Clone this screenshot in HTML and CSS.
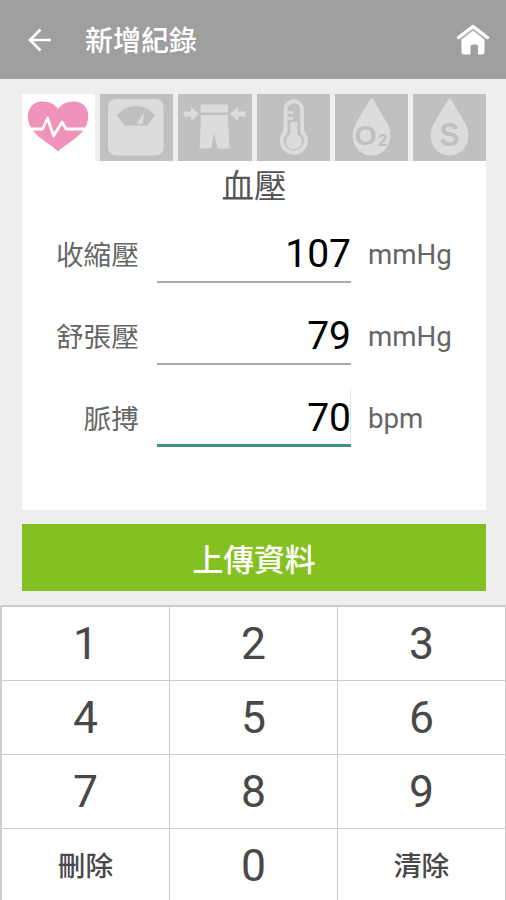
FILE: index.html
```html
<!DOCTYPE html>
<html lang="zh-Hant">
<head>
    <meta charset="UTF-8">
    <meta name="viewport" content="width=device-width, initial-scale=1.0">
    <title>新增紀錄</title>
    <link rel="stylesheet" href="styles.css">
</head>
<body>
    <header class="header">
        <svg class="back" viewBox="0 0 24 24">
            <path d="M23 12H2M12.5 1.5L2 12l10.5 10.5"/>
        </svg>
        <h1>新增紀錄</h1>
        <svg class="home" viewBox="0 0 34 32">
            <path class="house" d="M5.500 15.500L17 6.500l11.500 9V28q0 2.500-2.500 2.500h-4v-8q0-2-2-2h-3.500q-2 0-2 2v8H8q-2.500 0-2.500-2.500z"/>
            <path class="roof-gap" d="M3.500 15.500L17 5l13.500 10.500"/>
            <path class="roof" d="M2.500 13.500L17 2.500l14.500 11"/>
        </svg>
    </header>

    <main class="content">
        <section class="card">
            <nav class="tabs">
                <div class="tab active">
                    <svg viewBox="0 0 73 67">
                        <path class="heart" d="M36 57.500C30 51 13 43 8 32C2 18 9 7.500 20.500 7.500C28 7.500 33.500 11 36 15C38.500 11 44 7.500 51.500 7.500C63 7.500 70 18 64 32C59 43 42 51 36 57.500Z"/>
                        <path class="pulse" d="M8 35H20.500L25.500 24L31.500 42L40 28L44 35H67"/>
                    </svg>
                </div>
                <div class="tab">
                    <svg viewBox="0 0 73 67">
                        <rect class="fill" x="8" y="5" width="55.500" height="56.500" rx="8"/>
                        <path class="cut" d="M16.500 21Q25 12 36 12T55 21L47 31.500H24.500Z"/>
                        <path class="fill" d="M44 18L37 29.500H42.500Z"/>
                    </svg>
                </div>
                <div class="tab">
                    <svg viewBox="0 0 73 67">
                        <rect class="fill" x="22.500" y="10.500" width="27.500" height="8" rx="1.500"/>
                        <path class="fill" d="M23 21H49.500L51.500 54.500H39.500L36 39L33 54.500H21.500Z"/>
                        <path class="fill" d="M5.500 17.500H13V13L21 20L13 27V22.500H5.500ZM67.500 17.500H60V13L52 20L60 27V22.500H67.500Z"/>
                    </svg>
                </div>
                <div class="tab">
                    <svg viewBox="0 0 73 67">
                        <path class="ring" d="M28.500 38V15.500a8.250 8.250 0 0 1 16.500 0V38A12 12 0 1 1 28.500 38Z"/>
                        <circle class="fill" cx="36.750" cy="47.500" r="8"/>
                        <rect class="fill" x="33.250" y="28" width="7" height="16"/>
                        <path class="tick" d="M30 18.500H36M30 24.500H36"/>
                    </svg>
                </div>
                <div class="tab">
                    <svg viewBox="0 0 73 67">
                        <path class="fill" d="M36.500 4.500Q38 4.500 39 7L52.500 30C59.500 44 52.500 61.500 36.500 61.500S13.500 44 20.500 30L34 7Q35 4.500 36.500 4.500Z"/>
                        <text x="19.500" y="51" font-size="28.500">O</text>
                        <text x="43" y="52" font-size="17">2</text>
                    </svg>
                </div>
                <div class="tab">
                    <svg viewBox="0 0 73 67">
                        <path class="fill" d="M36.500 4.500Q38 4.500 39 7L52.500 30C59.500 44 52.500 61.500 36.500 61.500S13.500 44 20.500 30L34 7Q35 4.500 36.500 4.500Z"/>
                        <text x="26.500" y="51.500" font-size="34" textLength="20" lengthAdjust="spacingAndGlyphs">S</text>
                    </svg>
                </div>
            </nav>

            <h2>血壓</h2>

            <div class="row">
                <span class="label">收縮壓</span>
                <span class="value">107</span>
                <span class="unit">mmHg</span>
            </div>
            <div class="row">
                <span class="label">舒張壓</span>
                <span class="value">79</span>
                <span class="unit">mmHg</span>
            </div>
            <div class="row">
                <span class="label">脈搏</span>
                <span class="value focused">70</span>
                <span class="unit">bpm</span>
            </div>
        </section>

        <button class="upload">上傳資料</button>
    </main>

    <div class="keypad">
        <button>1</button>
        <button>2</button>
        <button>3</button>
        <button>4</button>
        <button>5</button>
        <button>6</button>
        <button>7</button>
        <button>8</button>
        <button>9</button>
        <button class="word">刪除</button>
        <button>0</button>
        <button class="word">清除</button>
    </div>
</body>
</html>
```
FILE: styles.css
```css
* {
    box-sizing: border-box;
    margin: 0;
    padding: 0;
    font-family: Roboto, "Noto Sans CJK TC", sans-serif;
}

body {
    background-color: #eeeeee;
    height: 900px;
    overflow: hidden;
}

.header {
    background-color: #9f9f9f;
    height: 79px;
    display: flex;
    align-items: center;
    padding: 0 16px 0 28px;
}

.back {
    width: 24px;
    height: 24px;
    fill: none;
    stroke: #fff;
    stroke-width: 2.6;
}

.header h1 {
    flex: 1;
    margin-left: 33px;
    padding-top: 4px;
    color: #fff;
    font-size: 28px;
    font-weight: 500;
    line-height: 40px;
}

.home {
    width: 34px;
    height: 32px;
}

.roof {
    fill: none;
    stroke: #fff;
    stroke-width: 3.4;
    stroke-linecap: round;
    stroke-linejoin: round;
}

.roof-gap {
    fill: none;
    stroke: #b5b5b5;
    stroke-width: 1.5;
}

.house {
    fill: #fff;
}

.content {
    padding: 15px 20px 14px 22px;
}

.card {
    background-color: #fff;
    height: 416px;
}

.tabs {
    display: flex;
    gap: 5px;
    height: 67px;
    background-color: #eeeeee;
}

.tab {
    flex: 1;
    background-color: #c0c0c0;
}

.tab.active {
    background-color: #fff;
}

.tab svg {
    display: block;
    width: 100%;
    height: 67px;
}

.heart {
    fill: #f093bb;
}

.pulse {
    fill: none;
    stroke: #fff;
    stroke-width: 2.8;
    stroke-linejoin: round;
}

.fill {
    fill: #dcdcdc;
}

.cut, .tab text {
    fill: #c0c0c0;
}

.tab text {
    font-family: "Liberation Sans", sans-serif;
    font-weight: bold;
}

.ring {
    fill: none;
    stroke: #dcdcdc;
    stroke-width: 4;
}

.tick {
    stroke: #dcdcdc;
    stroke-width: 2.5;
}

.card h2 {
    padding: 2px 0;
    color: #555;
    font-size: 32.500px;
    font-weight: 400;
    line-height: 48px;
    text-align: center;
}

.row {
    display: grid;
    grid-template-columns: 117px 194px 1fr;
    column-gap: 18px;
    height: 82px;
    align-items: center;
    color: #666;
    font-size: 27.700px;
}

.label {
    padding-bottom: 2px;
    text-align: right;
}

.unit {
    margin-left: -1px;
}

.value {
    height: 58px;
    line-height: 59px;
    border-bottom: 2px solid #aaa;
    color: #000;
    font-size: 39px;
    text-align: right;
}

.value.focused {
    border-bottom: 3px solid #3a9683;
    /* text cursor at the end of the field */
    background: linear-gradient(#dcebe8, #dcebe8) right top / 1px 52px no-repeat;
}

.upload {
    display: block;
    width: 100%;
    height: 67px;
    margin-top: 14px;
    border: none;
    background-color: #84c120;
    color: #fff;
    font-size: 30.800px;
    font-weight: 500;
}

.keypad {
    display: grid;
    grid-template-columns: repeat(3, 1fr);
    grid-auto-rows: 73px;
    gap: 1px;
    padding: 2px 1px 0 2px;
    background-color: #ccc;
}

.keypad button {
    padding-top: 1px;
    border: none;
    background-color: #fff;
    color: #484848;
    font-size: 44.500px;
}

.keypad .word {
    padding: 0 0 3px;
    font-size: 27.700px;
    font-weight: 500;
}
```
